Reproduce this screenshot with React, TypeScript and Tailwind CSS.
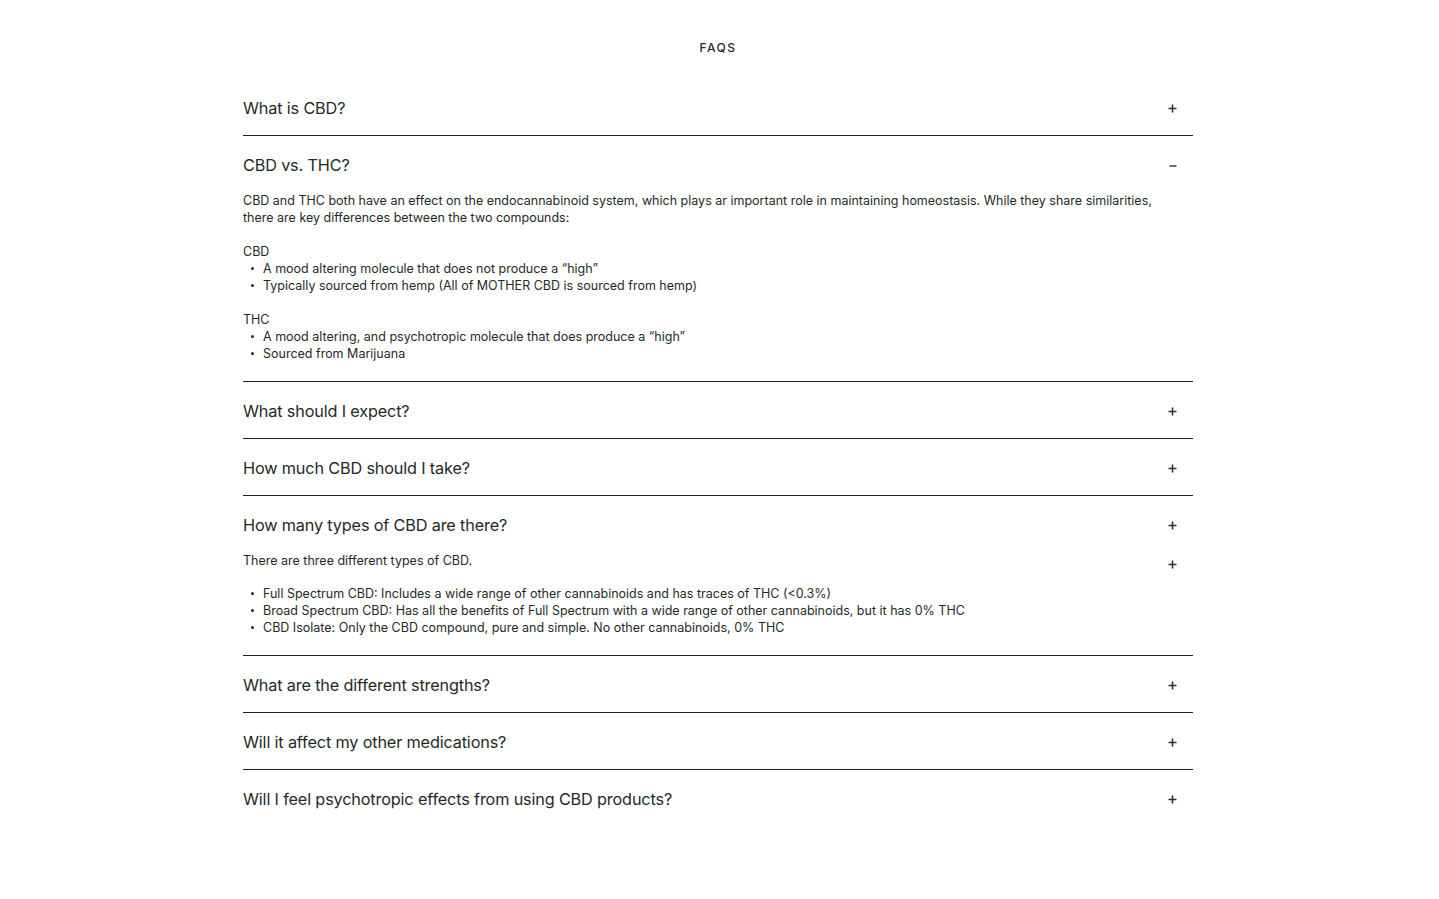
import React from "react";

type Faq = {
  q: string;
  open?: boolean;
  body?: React.ReactNode;
};

const Plus = () => (
  <svg width="9" height="9" viewBox="0 0 9 9" className="shrink-0">
    <path d="M4.5 0.5v8M0.5 4.5h8" stroke="#243324" strokeWidth="1.6" />
  </svg>
);

const Minus = () => (
  <svg width="8" height="9" viewBox="0 0 8 9" className="shrink-0">
    <path d="M0.5 5h7" stroke="#243324" strokeWidth="1.4" />
  </svg>
);

const Bullets = ({ items }: { items: string[] }) => (
  <ul>
    {items.map((item) => (
      <li key={item} className="flex items-center">
        <span className="flex w-[20px] shrink-0 pl-[8px]">
          <span className="h-[3px] w-[3px] rounded-full bg-[#1f2b1f]" />
        </span>
        <span>{item}</span>
      </li>
    ))}
  </ul>
);

const faqs: Faq[] = [
  { q: "What is CBD?" },
  {
    q: "CBD vs. THC?",
    open: true,
    body: (
      <div>
        <p className="max-w-[915px]">
          CBD and THC both have an effect on the endocannabinoid system, which plays ar important role in maintaining
          homeostasis. While they share similarities, there are key differences between the two compounds:
        </p>
        <p className="mt-[17px]">CBD</p>
        <Bullets
          items={[
            "A mood altering molecule that does not produce a “high”",
            "Typically sourced from hemp (All of MOTHER CBD is sourced from hemp)",
          ]}
        />
        <p className="mt-[17px]">THC</p>
        <Bullets
          items={["A mood altering, and psychotropic molecule that does produce a “high”", "Sourced from Marijuana"]}
        />
      </div>
    ),
  },
  { q: "What should I expect?" },
  { q: "How much CBD should I take?" },
  {
    q: "How many types of CBD are there?",
    body: (
      <div>
        <div className="flex items-start justify-between pr-4">
          <p>There are three different types of CBD.</p>
          <span className="mt-[8px]">
            <Plus />
          </span>
        </div>
        <div className="mt-[16px]">
          <Bullets
            items={[
              "Full Spectrum CBD: Includes a wide range of other cannabinoids and has traces of THC (<0.3%)",
              "Broad Spectrum CBD: Has all the benefits of Full Spectrum with a wide range of other cannabinoids, but it has 0% THC",
              "CBD Isolate: Only the CBD compound, pure and simple. No other cannabinoids, 0% THC",
            ]}
          />
        </div>
      </div>
    ),
  },
  { q: "What are the different strengths?" },
  { q: "Will it affect my other medications?" },
  { q: "Will I feel psychotropic effects from using CBD products?" },
];

export default function App() {
  return (
    <div
      className="min-h-screen bg-white pl-[243px] pr-[246px] text-[#1f2b1f]"
      style={{ fontFamily: "Inter, 'Liberation Sans', sans-serif" }}
    >
      <div className="pt-10 pb-20">
        <h2 className="text-center text-[12px] leading-4 font-medium tracking-[0.12em]">FAQS</h2>
        <div className="mt-[23px]">
          {faqs.map((faq, i) => (
            <div key={faq.q} className={i < faqs.length - 1 ? "border-b border-[#222]" : ""}>
              <div className="flex items-center justify-between pt-[17px] pb-[15px] pr-4">
                <span className="text-[16.25px] leading-6 tracking-[-0.01em]">{faq.q}</span>
                {faq.open ? <Minus /> : <Plus />}
              </div>
              {faq.body && <div className="pb-[19px] text-[12.5px] leading-[17px]">{faq.body}</div>}
            </div>
          ))}
        </div>
      </div>
    </div>
  );
}
